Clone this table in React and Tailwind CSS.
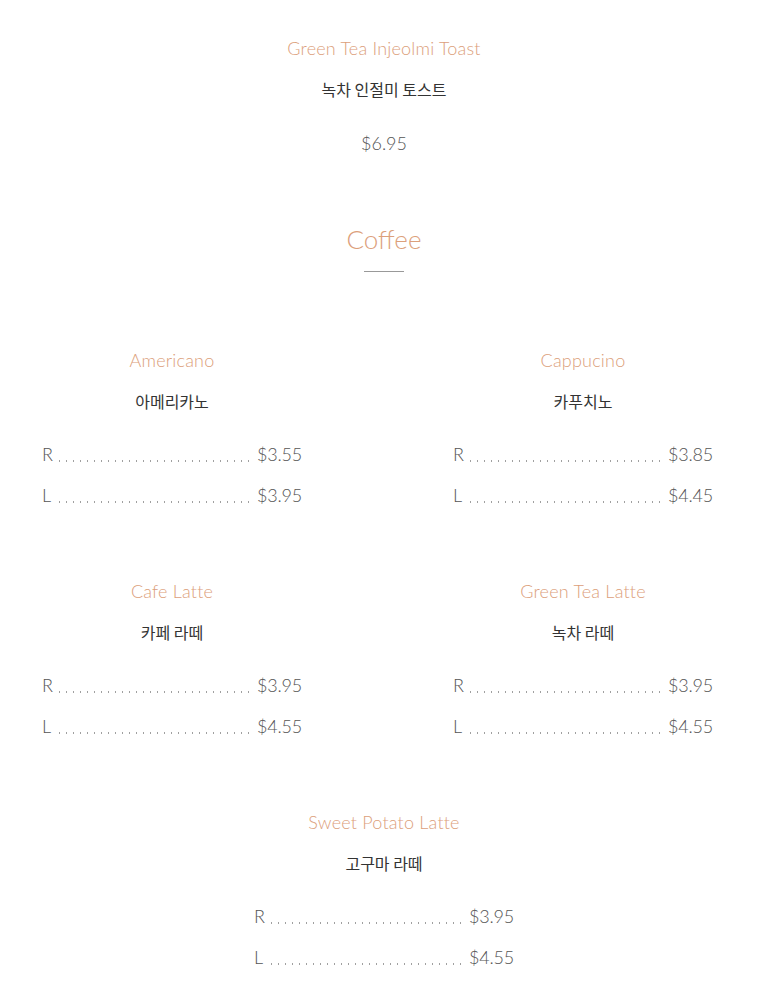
import React from "react";

const sans = "font-['Lato','Noto_Sans_CJK_KR',sans-serif]";

function PriceRow({ label, price, first }) {
  return (
    <div className={`flex items-end h-6 leading-6 text-[18px] font-light text-[#555] ${first ? "mt-[29px]" : "mt-[17px]"}`}>
      <span className="w-[10px]">{label}</span>
      <span className="flex-1 ml-[4px] mr-[7px] mb-[4px] h-[2px] bg-[radial-gradient(circle,#a0a0a0_0.7px,transparent_1.1px)] bg-[length:7px_2px] bg-repeat-x"></span>
      <span className="tracking-[-0.2px]">{price}</span>
    </div>
  );
}

function Item({ en, ko, r, l, className = "" }) {
  return (
    <div className={`w-[260px] flex flex-col ${className}`}>
      <div className="text-center h-6 leading-6 text-[18px] font-light tracking-[0.2px] text-[#dca07b]">{en}</div>
      <div className="text-center mt-[17px] h-6 leading-6 text-[16px] text-[#333] font-['Noto_Sans_CJK_KR',sans-serif]">{ko}</div>
      <PriceRow label="R" price={r} first />
      <PriceRow label="L" price={l} />
    </div>
  );
}

export default function App() {
  return (
    <div className={`w-[782px] min-h-[1004px] bg-white ${sans}`}>
      <div className="w-[768px] flex flex-col pt-9">
        <div className="text-center h-6 leading-6 text-[18px] font-light tracking-[0.2px] text-[#dca07b]">Green Tea Injeolmi Toast</div>
        <div className="text-center mt-[17px] h-6 leading-6 text-[16px] text-[#333] font-['Noto_Sans_CJK_KR',sans-serif]">녹차 인절미 토스트</div>
        <div className="text-center mt-[30px] h-6 leading-6 text-[18px] font-light text-[#555]">$6.95</div>
        <div className="text-center mt-[68px] h-8 leading-8 text-[26px] font-light text-[#dca07b]">Coffee</div>
        <div className="mt-4 mx-auto w-10 h-px bg-[#999]"></div>
        <div className="mt-[76px] pl-[42px] grid grid-cols-[260px_260px] gap-x-[151px] gap-y-[72px]">
          <Item en="Americano" ko="아메리카노" r="$3.55" l="$3.95" />
          <Item en="Cappucino" ko="카푸치노" r="$3.85" l="$4.45" />
          <Item en="Cafe Latte" ko="카페 라떼" r="$3.95" l="$4.55" />
          <Item en="Green Tea Latte" ko="녹차 라떼" r="$3.95" l="$4.55" />
        </div>
        <Item en="Sweet Potato Latte" ko="고구마 라떼" r="$3.95" l="$4.55" className="mx-auto mt-[72px]" />
      </div>
    </div>
  );
}
